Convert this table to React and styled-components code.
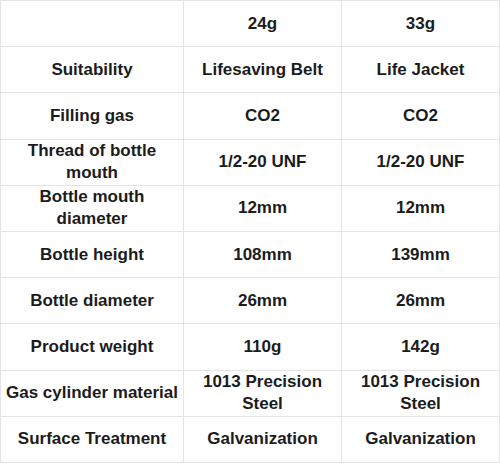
import styled, { createGlobalStyle } from 'styled-components';

const GlobalStyle = createGlobalStyle`
  body {
    margin: 0;
    background: #ffffff;
    font-family: 'Liberation Sans', Arial, sans-serif;
  }
`;

const rows = [
  ['', '24g', '33g'],
  ['Suitability', 'Lifesaving Belt', 'Life Jacket'],
  ['Filling gas', 'CO2', 'CO2'],
  ['Thread of bottle mouth', '1/2-20 UNF', '1/2-20 UNF'],
  ['Bottle mouth diameter', '12mm', '12mm'],
  ['Bottle height', '108mm', '139mm'],
  ['Bottle diameter', '26mm', '26mm'],
  ['Product weight', '110g', '142g'],
  ['Gas cylinder material', '1013 Precision Steel', '1013 Precision Steel'],
  ['Surface Treatment', 'Galvanization', 'Galvanization'],
];

const App = () => {
  return (
    <>
      <GlobalStyle />
      <Table>
        {rows.map((row, i) =>
          row.map((text, j) => (
            <Cell key={`${i}-${j}`} $wide={j === 0}>
              {text}
            </Cell>
          ))
        )}
      </Table>
    </>
  );
};

export default App;

const Table = styled.div`
  width: 500px;
  height: 463px;
  box-sizing: border-box;
  display: grid;
  grid-template-columns: 182px 157px 157px;
  grid-template-rows: repeat(10, 1fr);
  gap: 1px;
  padding: 1px;
  background: #e4e4e4;
`;

const Cell = styled.div`
  background: #ffffff;
  display: flex;
  align-items: center;
  justify-content: center;
  text-align: center;
  padding: 0 ${(p) => (p.$wide ? '4px' : '8px')};
  font-size: 17px;
  font-weight: bold;
  line-height: 22px;
  color: #1c1c1c;
`;
